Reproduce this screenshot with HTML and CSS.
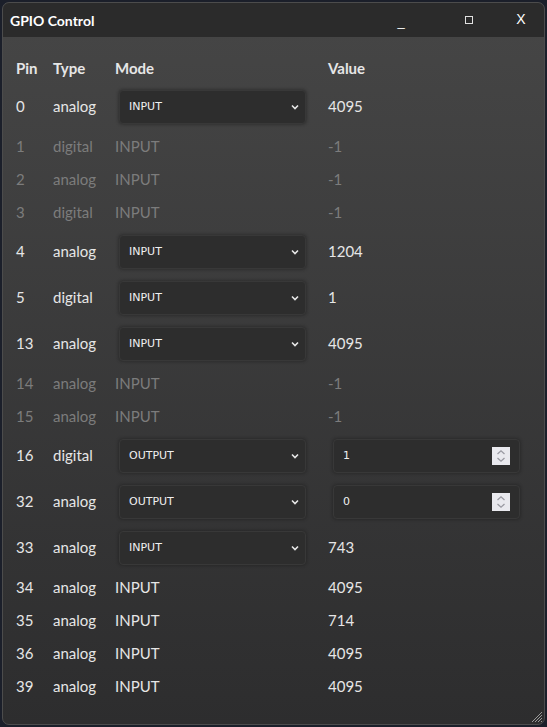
FILE: index.html
```html
<!DOCTYPE html>
<html>
<head>
<meta charset="utf-8">
<link rel="stylesheet" href="styles.css">
</head>
<body>
<div class="window">
  <div class="titlebar">
    <span class="title">GPIO Control</span>
    <div class="controls">
      <span class="ctl ctl-min">_</span>
      <span class="ctl ctl-max"><span class="sq"></span></span>
      <span class="ctl ctl-close">X</span>
    </div>
  </div>
  <div class="content">
    <div class="row head"><span>Pin</span><span>Type</span><span>Mode</span><span>Value</span></div>

    <div class="row tall"><span>0</span><span>analog</span><div class="select"><span>INPUT</span><svg class="chev" width="8" height="6" viewBox="0 0 8 6"><path d="M1 1.5 L4 4.5 L7 1.5" fill="none" stroke="#e8e8e8" stroke-width="1.6"/></svg></div><span>4095</span></div>
    <div class="row dim"><span>1</span><span>digital</span><span>INPUT</span><span>-1</span></div>
    <div class="row dim"><span>2</span><span>analog</span><span>INPUT</span><span>-1</span></div>
    <div class="row dim"><span>3</span><span>digital</span><span>INPUT</span><span>-1</span></div>
    <div class="row tall"><span>4</span><span>analog</span><div class="select"><span>INPUT</span><svg class="chev" width="8" height="6" viewBox="0 0 8 6"><path d="M1 1.5 L4 4.5 L7 1.5" fill="none" stroke="#e8e8e8" stroke-width="1.6"/></svg></div><span>1204</span></div>
    <div class="row tall"><span>5</span><span>digital</span><div class="select"><span>INPUT</span><svg class="chev" width="8" height="6" viewBox="0 0 8 6"><path d="M1 1.5 L4 4.5 L7 1.5" fill="none" stroke="#e8e8e8" stroke-width="1.6"/></svg></div><span>1</span></div>
    <div class="row tall"><span>13</span><span>analog</span><div class="select"><span>INPUT</span><svg class="chev" width="8" height="6" viewBox="0 0 8 6"><path d="M1 1.5 L4 4.5 L7 1.5" fill="none" stroke="#e8e8e8" stroke-width="1.6"/></svg></div><span>4095</span></div>
    <div class="row dim"><span>14</span><span>analog</span><span>INPUT</span><span>-1</span></div>
    <div class="row dim"><span>15</span><span>analog</span><span>INPUT</span><span>-1</span></div>
    <div class="row tall"><span>16</span><span>digital</span><div class="select"><span>OUTPUT</span><svg class="chev" width="8" height="6" viewBox="0 0 8 6"><path d="M1 1.5 L4 4.5 L7 1.5" fill="none" stroke="#e8e8e8" stroke-width="1.6"/></svg></div><div class="spin"><span>1</span><span class="spinbtn"><svg width="18" height="18" viewBox="0 0 18 18"><path d="M5.5 7 L9 3.8 L12.5 7" fill="none" stroke="#9a9aa2" stroke-width="1.3"/><path d="M5.5 11 L9 14.2 L12.5 11" fill="none" stroke="#9a9aa2" stroke-width="1.3"/></svg></span></div></div>
    <div class="row tall"><span>32</span><span>analog</span><div class="select"><span>OUTPUT</span><svg class="chev" width="8" height="6" viewBox="0 0 8 6"><path d="M1 1.5 L4 4.5 L7 1.5" fill="none" stroke="#e8e8e8" stroke-width="1.6"/></svg></div><div class="spin"><span>0</span><span class="spinbtn"><svg width="18" height="18" viewBox="0 0 18 18"><path d="M5.5 7 L9 3.8 L12.5 7" fill="none" stroke="#9a9aa2" stroke-width="1.3"/><path d="M5.5 11 L9 14.2 L12.5 11" fill="none" stroke="#9a9aa2" stroke-width="1.3"/></svg></span></div></div>
    <div class="row tall"><span>33</span><span>analog</span><div class="select"><span>INPUT</span><svg class="chev" width="8" height="6" viewBox="0 0 8 6"><path d="M1 1.5 L4 4.5 L7 1.5" fill="none" stroke="#e8e8e8" stroke-width="1.6"/></svg></div><span>743</span></div>
    <div class="row"><span>34</span><span>analog</span><span>INPUT</span><span>4095</span></div>
    <div class="row"><span>35</span><span>analog</span><span>INPUT</span><span>714</span></div>
    <div class="row"><span>36</span><span>analog</span><span>INPUT</span><span>4095</span></div>
    <div class="row"><span>39</span><span>analog</span><span>INPUT</span><span>4095</span></div>
  </div>
  <svg class="grip" width="14" height="14" viewBox="0 0 14 14"><path d="M13 3 L3 13 M13 6 L6 13 M13 9 L9 13 M13 12 L12 13" stroke="#9a9a9a" stroke-width="1"/></svg>
</div>
</body>
</html>
```
FILE: styles.css
```css
* { box-sizing: border-box; }
html, body { margin: 0; padding: 0; }
body {
  background: #1b1f2a;
  width: 547px;
  height: 727px;
  padding: 2px 2px 2px 2px;
  font-family: Lato, "Noto Sans", sans-serif;
}
.window {
  position: relative;
  width: 543px;
  height: 723px;
  border: 1px solid #4c4c4c;
  border-radius: 7px;
  overflow: hidden;
  display: flex;
  flex-direction: column;
  background: linear-gradient(#464646, #2d2d2e);
}
.titlebar {
  height: 34px;
  flex: none;
  background: #2b2b2b;
  display: flex;
  align-items: center;
  justify-content: space-between;
  padding-left: 7px;
}
.title {
  color: #ffffff;
  font-weight: 700;
  font-size: 14px;
}
.controls {
  display: flex;
  align-items: center;
  height: 100%;
}
.ctl {
  color: #ffffff;
  font-family: "Liberation Sans", sans-serif;
  font-size: 13px;
  display: flex;
  align-items: center;
  justify-content: center;
}
.ctl-min { width: 8px; margin-right: 58px; padding-top: 2px; }
.ctl-max { width: 8px; margin-right: 43px; margin-left: 2px; }
.sq { width: 8px; height: 8px; border: 1.5px solid #e0e0e0; display: block; }
.ctl-close { width: 10px; margin-right: 18px; font-size: 14px; margin-top: -2px; }
.content {
  padding: 16px 0 0 13px;
  color: #e6e6e6;
  font-size: 15px;
}
.row {
  display: grid;
  grid-template-columns: 37px 62px 213px 1fr;
  align-items: center;
  height: 33px;
}
.row.head { height: 30px; font-weight: 700; }
.row.tall { height: 46px; }
.row.dim { color: #7c7c7c; }
.select, .spin {
  width: 187px;
  height: 34px;
  margin-left: 4px;
  margin-top: 1px;
  background: #2d2d2d;
  border-radius: 4px;
  border: 1px solid #383838;
  box-shadow: 0 0 3px 1px rgba(25,25,25,0.4);
  display: flex;
  align-items: center;
  justify-content: space-between;
  padding: 0 6px 0 9px;
  font-family: "DejaVu Sans", sans-serif;
  font-size: 11px;
  color: #f0f0f0;
}
.spin { margin-left: 5px; padding-right: 9px; }
.chev { margin-top: 1px; }
.spinbtn {
  width: 18px;
  height: 18px;
  background: #e9e9ee;
  display: block;
}
.spinbtn svg { display: block; }
.grip {
  position: absolute;
  right: 1px;
  bottom: 1px;
}
```
